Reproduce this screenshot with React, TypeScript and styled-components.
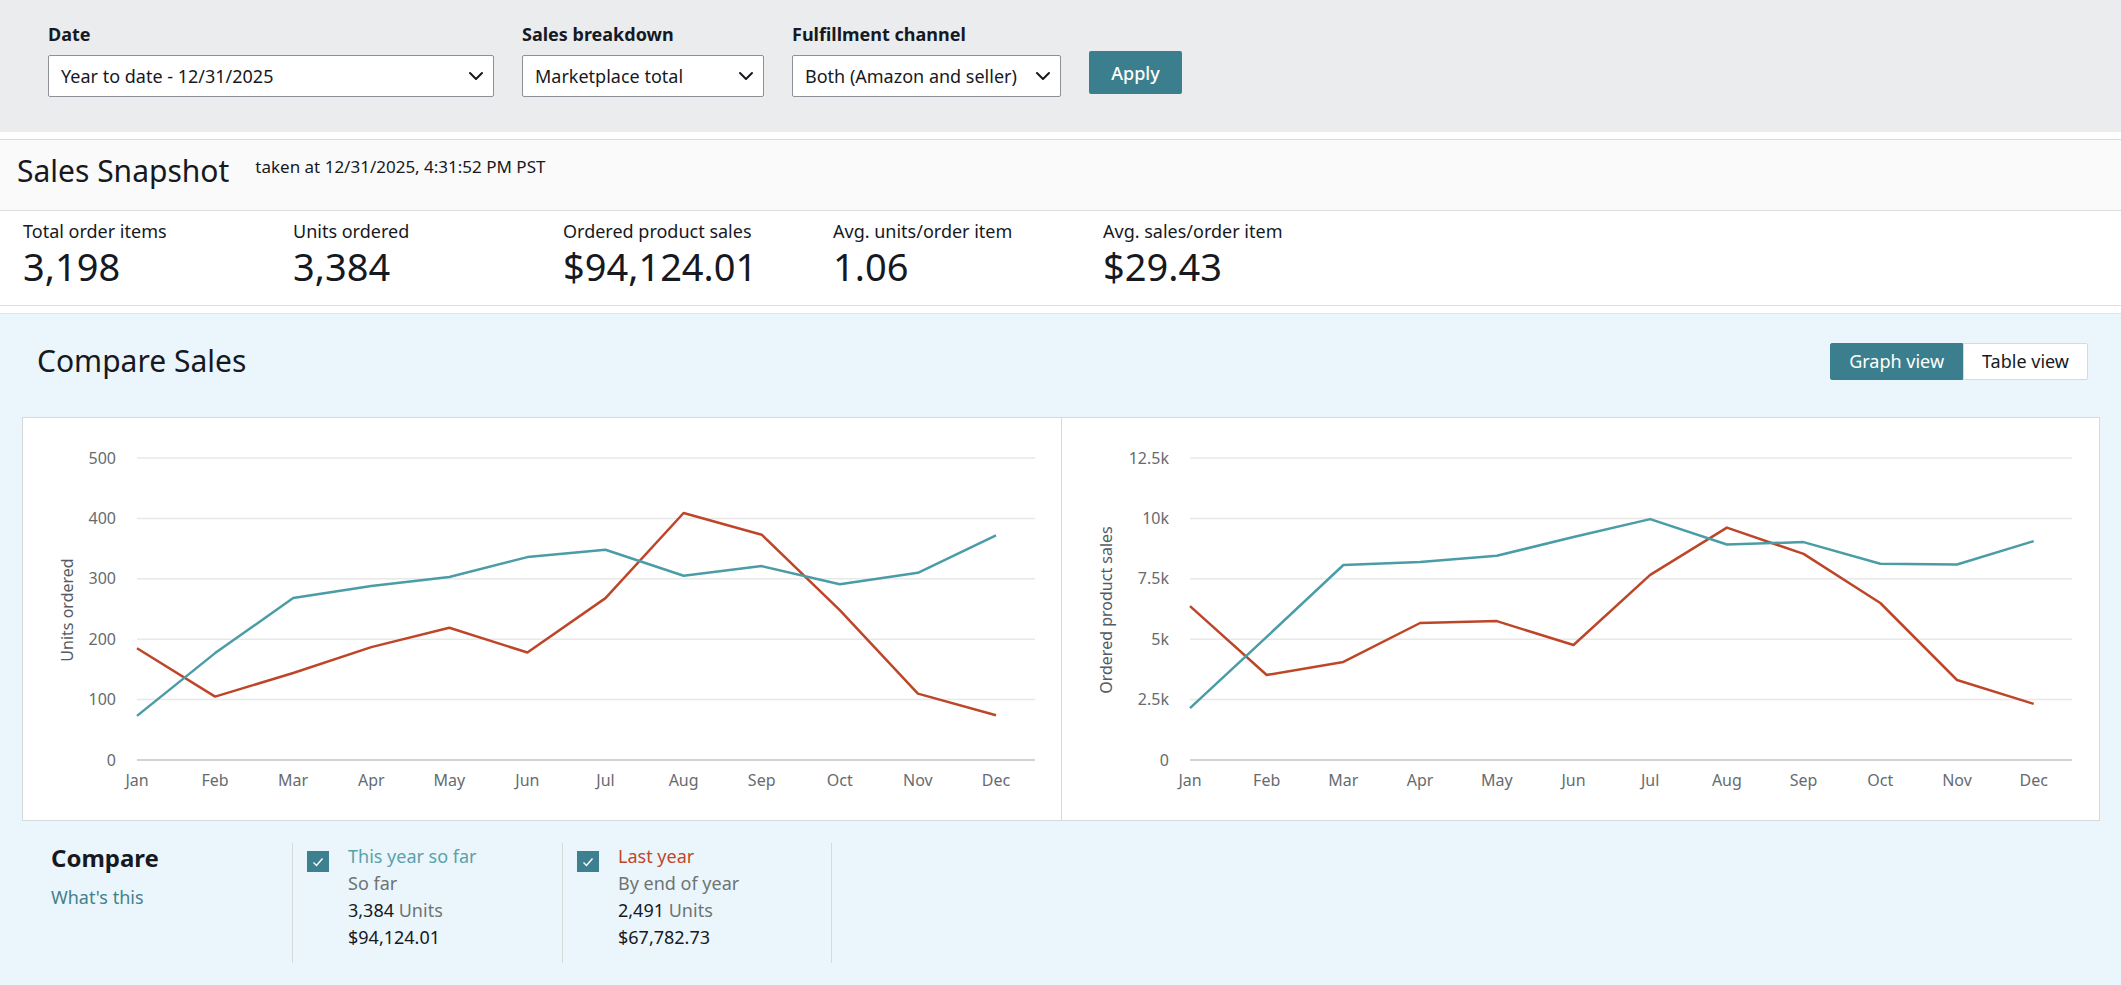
import React from "react";
import styled, { createGlobalStyle } from "styled-components";
import { ChevronDown } from "lucide-react";

const GlobalStyle = createGlobalStyle`
  html, body { margin: 0; padding: 0; }
  body {
    font-family: "Noto Sans", "Open Sans", sans-serif;
    color: #16191f;
    background: #ffffff;
  }
  * { box-sizing: border-box; }
`;

const TEAL = "#4a9ca6";
const RED = "#bd4629";
const BRAND = "#3b7f8e";

const Page = styled.div`
  min-height: 100vh;
  display: flex;
  flex-direction: column;
`;

/* ---------- Filter bar ---------- */
const FilterBar = styled.div`
  background: #eaecee;
  height: 132px;
  padding: 22px 48px 0;
  display: flex;
  align-items: flex-start;
  gap: 28px;
`;

const Field = styled.div`
  display: flex;
  flex-direction: column;
  gap: 9px;
`;

const FieldLabel = styled.div`
  font-size: 18px;
  line-height: 24px;
  font-weight: 700;
  color: #16191f;
`;

const SelectBox = styled.div<{ $w: number }>`
  width: ${(p) => p.$w}px;
  height: 42px;
  background: #ffffff;
  border: 1px solid #8d9096;
  border-radius: 2px;
  display: flex;
  align-items: center;
  justify-content: space-between;
  padding: 0 5px 0 12px;
  font-size: 18px;
  color: #16191f;
  white-space: nowrap;
`;

const ApplyButton = styled.button`
  margin-top: 29px;
  height: 43px;
  width: 93px;
  background: ${BRAND};
  color: #ffffff;
  border: none;
  border-radius: 2px;
  font-family: inherit;
  font-size: 18px;
  font-weight: 500;
  cursor: pointer;
`;

/* ---------- Snapshot ---------- */
const Snapshot = styled.section`
  margin-top: 7px;
  border-top: 1px solid #dcdcdc;
`;

const SnapshotHeader = styled.div`
  background: #fafafa;
  height: 71px;
  padding: 13px 17px 0;
  display: flex;
  align-items: flex-start;
  gap: 26px;
  border-bottom: 1px solid #dedede;
`;

const BigTitle = styled.h2`
  margin: 0;
  font-size: 30px;
  line-height: 36px;
  font-weight: 400;
  color: #16191f;
`;

const TakenAt = styled.span`
  margin-top: 3px;
  font-size: 17px;
  line-height: 22px;
  color: #16191f;
`;

const MetricsRow = styled.div`
  display: flex;
  height: 95px;
  padding: 8px 0 0 23px;
  border-bottom: 1px solid #dedede;
`;

const Metric = styled.div`
  width: 270px;
  display: flex;
  flex-direction: column;
`;

const MetricLabel = styled.div`
  font-size: 18px;
  line-height: 24px;
  color: #16191f;
`;

const MetricValue = styled.div`
  font-size: 38px;
  line-height: 46px;
  color: #16191f;
`;

/* ---------- Compare ---------- */
const CompareSection = styled.section`
  flex: 1;
  margin-top: 7px;
  background: #ebf6fc;
  border-top: 1px solid #dfe4e8;
  padding: 28px 21px 22px 22px;
`;

const CompareHeader = styled.div`
  height: 38px;
  display: flex;
  align-items: center;
  justify-content: space-between;
  padding: 0 12px 0 15px;
  margin-bottom: 37px;
`;

const Toggle = styled.div`
  display: flex;
`;

const ToggleButton = styled.button<{ $active?: boolean }>`
  height: 37px;
  padding: 0 18px;
  font-family: inherit;
  font-size: 18px;
  border-radius: ${(p) => (p.$active ? "2px 0 0 2px" : "0 2px 2px 0")};
  border: 1px solid ${(p) => (p.$active ? BRAND : "#d5dbdb")};
  background: ${(p) => (p.$active ? BRAND : "#ffffff")};
  color: ${(p) => (p.$active ? "#ffffff" : "#16191f")};
  cursor: pointer;
`;

const ChartCard = styled.div`
  display: flex;
  height: 404px;
  background: #ffffff;
  border: 1px solid #d5dbdb;
`;

const ChartPanel = styled.div`
  flex: 1;
  min-width: 0;
  & + & {
    border-left: 1px solid #d5dbdb;
  }
`;

const ChartSvg = styled.svg`
  display: block;
  width: 100%;
  height: 100%;
  font-family: "Noto Sans", "Open Sans", sans-serif;
`;

const LegendRow = styled.div`
  margin-top: 22px;
  display: flex;
`;

const LegendIntro = styled.div`
  width: 270px;
  padding-left: 29px;
  display: flex;
  flex-direction: column;
`;

const LegendTitle = styled.div`
  font-size: 24px;
  line-height: 30px;
  font-weight: 700;
  color: #16191f;
`;

const WhatsThis = styled.a`
  margin-top: 12px;
  font-size: 18px;
  line-height: 24px;
  color: #44808c;
  text-decoration: none;
`;

const LegendItem = styled.div<{ $last?: boolean }>`
  width: 270px;
  display: flex;
  gap: 19px;
  padding: 0 0 12px 14px;
  border-left: 1px solid #d5dbdb;
  ${(p) => (p.$last ? "border-right: 1px solid #d5dbdb;" : "")}
`;

const CheckBox = styled.span`
  margin-top: 8px;
  width: 22px;
  height: 21px;
  flex: none;
  background: #3d8190;
  display: flex;
  align-items: center;
  justify-content: center;
`;

const LegendText = styled.div`
  display: flex;
  flex-direction: column;
  font-size: 18px;
  line-height: 27px;
`;

const SeriesName = styled.span<{ $color: string }>`
  color: ${(p) => p.$color};
`;

const Muted = styled.span`
  color: #6f7373;
`;

const Strong = styled.span`
  color: #16191f;
`;

/* ---------- Chart ---------- */
const MONTHS = ["Jan", "Feb", "Mar", "Apr", "May", "Jun", "Jul", "Aug", "Sep", "Oct", "Nov", "Dec"];

type ChartProps = {
  title: string;
  ticks: string[];
  max: number;
  plotStart: number;
  plotEnd: number;
  labelEnd: number;
  thisYear: number[];
  lastYear: number[];
};

const TOP = 40;
const BOTTOM = 342;

function LineChart({ title, ticks, max, plotStart, plotEnd, labelEnd, thisYear, lastYear }: ChartProps) {
  const step = (plotEnd - plotStart) / 11.5;
  const x = (i: number) => plotStart + i * step;
  const y = (v: number) => BOTTOM - (v / max) * (BOTTOM - TOP);
  const pts = (arr: number[]) => arr.map((v, i) => `${x(i).toFixed(1)},${y(v).toFixed(1)}`).join(" ");
  const tickCount = ticks.length - 1;
  return (
    <ChartSvg>
      {ticks.map((t, i) => {
        const ty = BOTTOM - (i / tickCount) * (BOTTOM - TOP);
        return (
          <g key={t}>
            <line
              x1={plotStart}
              x2={plotEnd}
              y1={ty}
              y2={ty}
              stroke={i === 0 ? "#d3d3d3" : "#e8e8e8"}
              strokeWidth={i === 0 ? 2 : 1.5}
            />
            <text x={labelEnd} y={ty} dy="0.35em" textAnchor="end" fontSize={16} fill="#666b70">
              {t}
            </text>
          </g>
        );
      })}
      {MONTHS.map((m, i) => (
        <text key={m} x={x(i)} y={368} textAnchor="middle" fontSize={16} fill="#666b70">
          {m}
        </text>
      ))}
      <text
        x={44}
        y={192}
        transform="rotate(-90 44 192)"
        textAnchor="middle"
        dy="0.35em"
        fontSize={16}
        fill="#545b64"
      >
        {title}
      </text>
      <polyline points={pts(lastYear)} fill="none" stroke={RED} strokeWidth={2.5} strokeLinejoin="round" />
      <polyline points={pts(thisYear)} fill="none" stroke={TEAL} strokeWidth={2.5} strokeLinejoin="round" />
    </ChartSvg>
  );
}

const unitsThis = [73, 177, 268, 288, 303, 336, 348, 305, 321, 291, 310, 372];
const unitsLast = [185, 105, 144, 187, 219, 178, 268, 409, 373, 248, 110, 74];
const salesThis = [2.15, 5.1, 8.07, 8.2, 8.45, 9.23, 9.97, 8.92, 9.02, 8.12, 8.09, 9.06];
const salesLast = [6.37, 3.52, 4.06, 5.67, 5.75, 4.76, 7.66, 9.62, 8.53, 6.5, 3.31, 2.32];

const CheckMark = () => (
  <svg width="14" height="14" viewBox="0 0 14 14">
    <path d="M2.5 7.5 L5.5 10.5 L11.5 3.5" fill="none" stroke="#ffffff" strokeWidth="1.4" />
  </svg>
);

export default function App() {
  return (
    <Page>
      <GlobalStyle />
      <FilterBar>
        <Field>
          <FieldLabel>Date</FieldLabel>
          <SelectBox $w={446}>
            Year to date - 12/31/2025
            <ChevronDown size={24} strokeWidth={2} color="#16191f" />
          </SelectBox>
        </Field>
        <Field>
          <FieldLabel>Sales breakdown</FieldLabel>
          <SelectBox $w={242}>
            Marketplace total
            <ChevronDown size={24} strokeWidth={2} color="#16191f" />
          </SelectBox>
        </Field>
        <Field>
          <FieldLabel>Fulfillment channel</FieldLabel>
          <SelectBox $w={269}>
            Both (Amazon and seller)
            <ChevronDown size={24} strokeWidth={2} color="#16191f" />
          </SelectBox>
        </Field>
        <ApplyButton>Apply</ApplyButton>
      </FilterBar>

      <Snapshot>
        <SnapshotHeader>
          <BigTitle>Sales Snapshot</BigTitle>
          <TakenAt>taken at 12/31/2025, 4:31:52 PM PST</TakenAt>
        </SnapshotHeader>
        <MetricsRow>
          <Metric>
            <MetricLabel>Total order items</MetricLabel>
            <MetricValue>3,198</MetricValue>
          </Metric>
          <Metric>
            <MetricLabel>Units ordered</MetricLabel>
            <MetricValue>3,384</MetricValue>
          </Metric>
          <Metric>
            <MetricLabel>Ordered product sales</MetricLabel>
            <MetricValue>$94,124.01</MetricValue>
          </Metric>
          <Metric>
            <MetricLabel>Avg. units/order item</MetricLabel>
            <MetricValue>1.06</MetricValue>
          </Metric>
          <Metric>
            <MetricLabel>Avg. sales/order item</MetricLabel>
            <MetricValue>$29.43</MetricValue>
          </Metric>
        </MetricsRow>
      </Snapshot>

      <CompareSection>
        <CompareHeader>
          <BigTitle>Compare Sales</BigTitle>
          <Toggle>
            <ToggleButton $active>Graph view</ToggleButton>
            <ToggleButton>Table view</ToggleButton>
          </Toggle>
        </CompareHeader>

        <ChartCard>
          <ChartPanel>
            <LineChart
              title="Units ordered"
              ticks={["0", "100", "200", "300", "400", "500"]}
              max={500}
              plotStart={114}
              plotEnd={1012}
              labelEnd={93}
              thisYear={unitsThis}
              lastYear={unitsLast}
            />
          </ChartPanel>
          <ChartPanel>
            <LineChart
              title="Ordered product sales"
              ticks={["0", "2.5k", "5k", "7.5k", "10k", "12.5k"]}
              max={12.5}
              plotStart={128}
              plotEnd={1010}
              labelEnd={107}
              thisYear={salesThis}
              lastYear={salesLast}
            />
          </ChartPanel>
        </ChartCard>

        <LegendRow>
          <LegendIntro>
            <LegendTitle>Compare</LegendTitle>
            <WhatsThis href="#">What's this</WhatsThis>
          </LegendIntro>
          <LegendItem>
            <CheckBox>
              <CheckMark />
            </CheckBox>
            <LegendText>
              <SeriesName $color="#5aa1ab">This year so far</SeriesName>
              <Muted>So far</Muted>
              <span>
                <Strong>3,384</Strong> <Muted>Units</Muted>
              </span>
              <Strong>$94,124.01</Strong>
            </LegendText>
          </LegendItem>
          <LegendItem $last>
            <CheckBox>
              <CheckMark />
            </CheckBox>
            <LegendText>
              <SeriesName $color="#c0462a">Last year</SeriesName>
              <Muted>By end of year</Muted>
              <span>
                <Strong>2,491</Strong> <Muted>Units</Muted>
              </span>
              <Strong>$67,782.73</Strong>
            </LegendText>
          </LegendItem>
        </LegendRow>
      </CompareSection>
    </Page>
  );
}
